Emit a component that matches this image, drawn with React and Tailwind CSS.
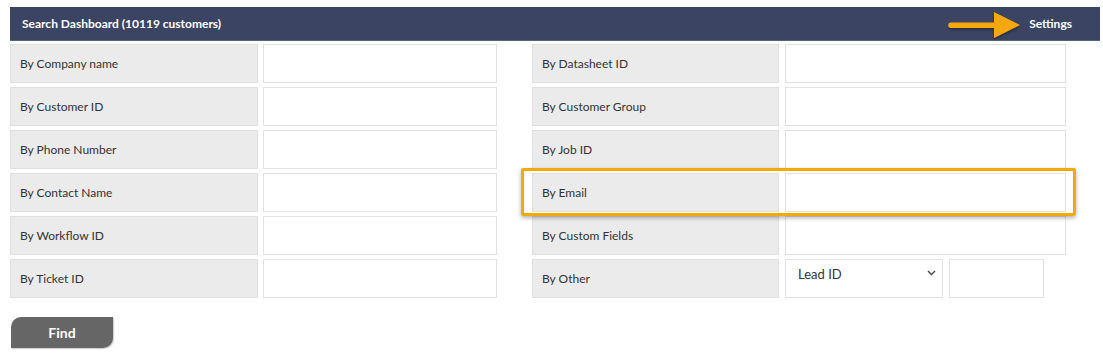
import React from 'react';

const leftRows = ['By Company name', 'By Customer ID', 'By Phone Number', 'By Contact Name', 'By Workflow ID', 'By Ticket ID'];
const rightRows = ['By Datasheet ID', 'By Customer Group', 'By Job ID', 'By Email', 'By Custom Fields'];

const Label = ({ children, w }) => (
    <div className={`${w} h-[39px] bg-[#ebebeb] border border-[#e0e0e0] flex items-center pl-[9px] text-[12px] text-[#333]`}>
        {children}
    </div>
);

const Field = ({ w }) => (
    <div className={`${w} h-[39px] bg-white border border-[#e2e2e2]`} />
);

const App = () => {
    return (
        <div className="relative w-[1103px] h-[356px] bg-white pl-[10px] pt-[7px] font-['Lato','Liberation_Sans',sans-serif]">
            <div className="w-[1090px] h-[34px] bg-[#3b4563] border-b border-[#4e6a7a] flex items-center justify-between pl-[12px] pr-[28px] text-white text-[12px] font-bold">
                <span>Search Dashboard (10119 customers)</span>
                <span>Settings</span>
            </div>

            <div className="flex mt-[3px]">
                <div className="flex flex-col gap-[4px] w-[522px]">
                    {leftRows.map((r) => (
                        <div key={r} className="flex gap-[5px]">
                            <Label w="w-[248px]">{r}</Label>
                            <Field w="w-[234px]" />
                        </div>
                    ))}
                </div>
                <div className="flex flex-col gap-[4px]">
                    {rightRows.map((r) => (
                        <div key={r} className="flex gap-[6px]">
                            <Label w="w-[247px]">{r}</Label>
                            <Field w="w-[281px]" />
                        </div>
                    ))}
                    <div className="flex gap-[6px]">
                        <Label w="w-[247px]">By Other</Label>
                        <div className="w-[158px] h-[39px] bg-white border border-[#e2e2e2] flex justify-between pl-[12px] pr-[5px] pt-[5px] text-[13px] text-[#333]">
                            <span>Lead ID</span>
                            <svg width="11" height="10" viewBox="0 0 11 10" className="mt-[3px]">
                                <path d="M2 3 L5.5 6.5 L9 3" fill="none" stroke="#444" strokeWidth="1.4" />
                            </svg>
                        </div>
                        <div className="w-[95px] h-[39px] bg-white border border-[#e2e2e2]" />
                    </div>
                </div>
            </div>

            <button className="mt-[19px] ml-px w-[102px] h-[31px] bg-[#666] text-white text-[14px] font-bold rounded-tl-[10px] rounded-br-[10px] shadow-[1px_1px_1px_#ccc]">
                Find
            </button>

            {/* highlight box over By Email row */}
            <div className="absolute left-[521px] top-[168px] w-[555px] h-[48px] border-[3px] border-[#f5a80a] rounded-[2px] shadow-[0_2px_4px_rgba(0,0,0,0.3)]" />

            {/* arrow pointing at Settings */}
            <svg className="absolute left-[945px] top-[9px]" width="80" height="34" viewBox="0 0 80 34">
                <defs>
                    <filter id="sh" x="-20%" y="-30%" width="140%" height="170%">
                        <feDropShadow dx="0" dy="2" stdDeviation="1.5" floodColor="#000" floodOpacity="0.35" />
                    </filter>
                </defs>
                <g filter="url(#sh)">
                    <path d="M6 13.5 L49 13.5 L49 3 L75 16 L49 29 L49 19 L6 19 A2.75 2.75 0 0 1 6 13.5 Z" fill="#f5a80a" />
                </g>
            </svg>
        </div>
    );
};

export default App;
